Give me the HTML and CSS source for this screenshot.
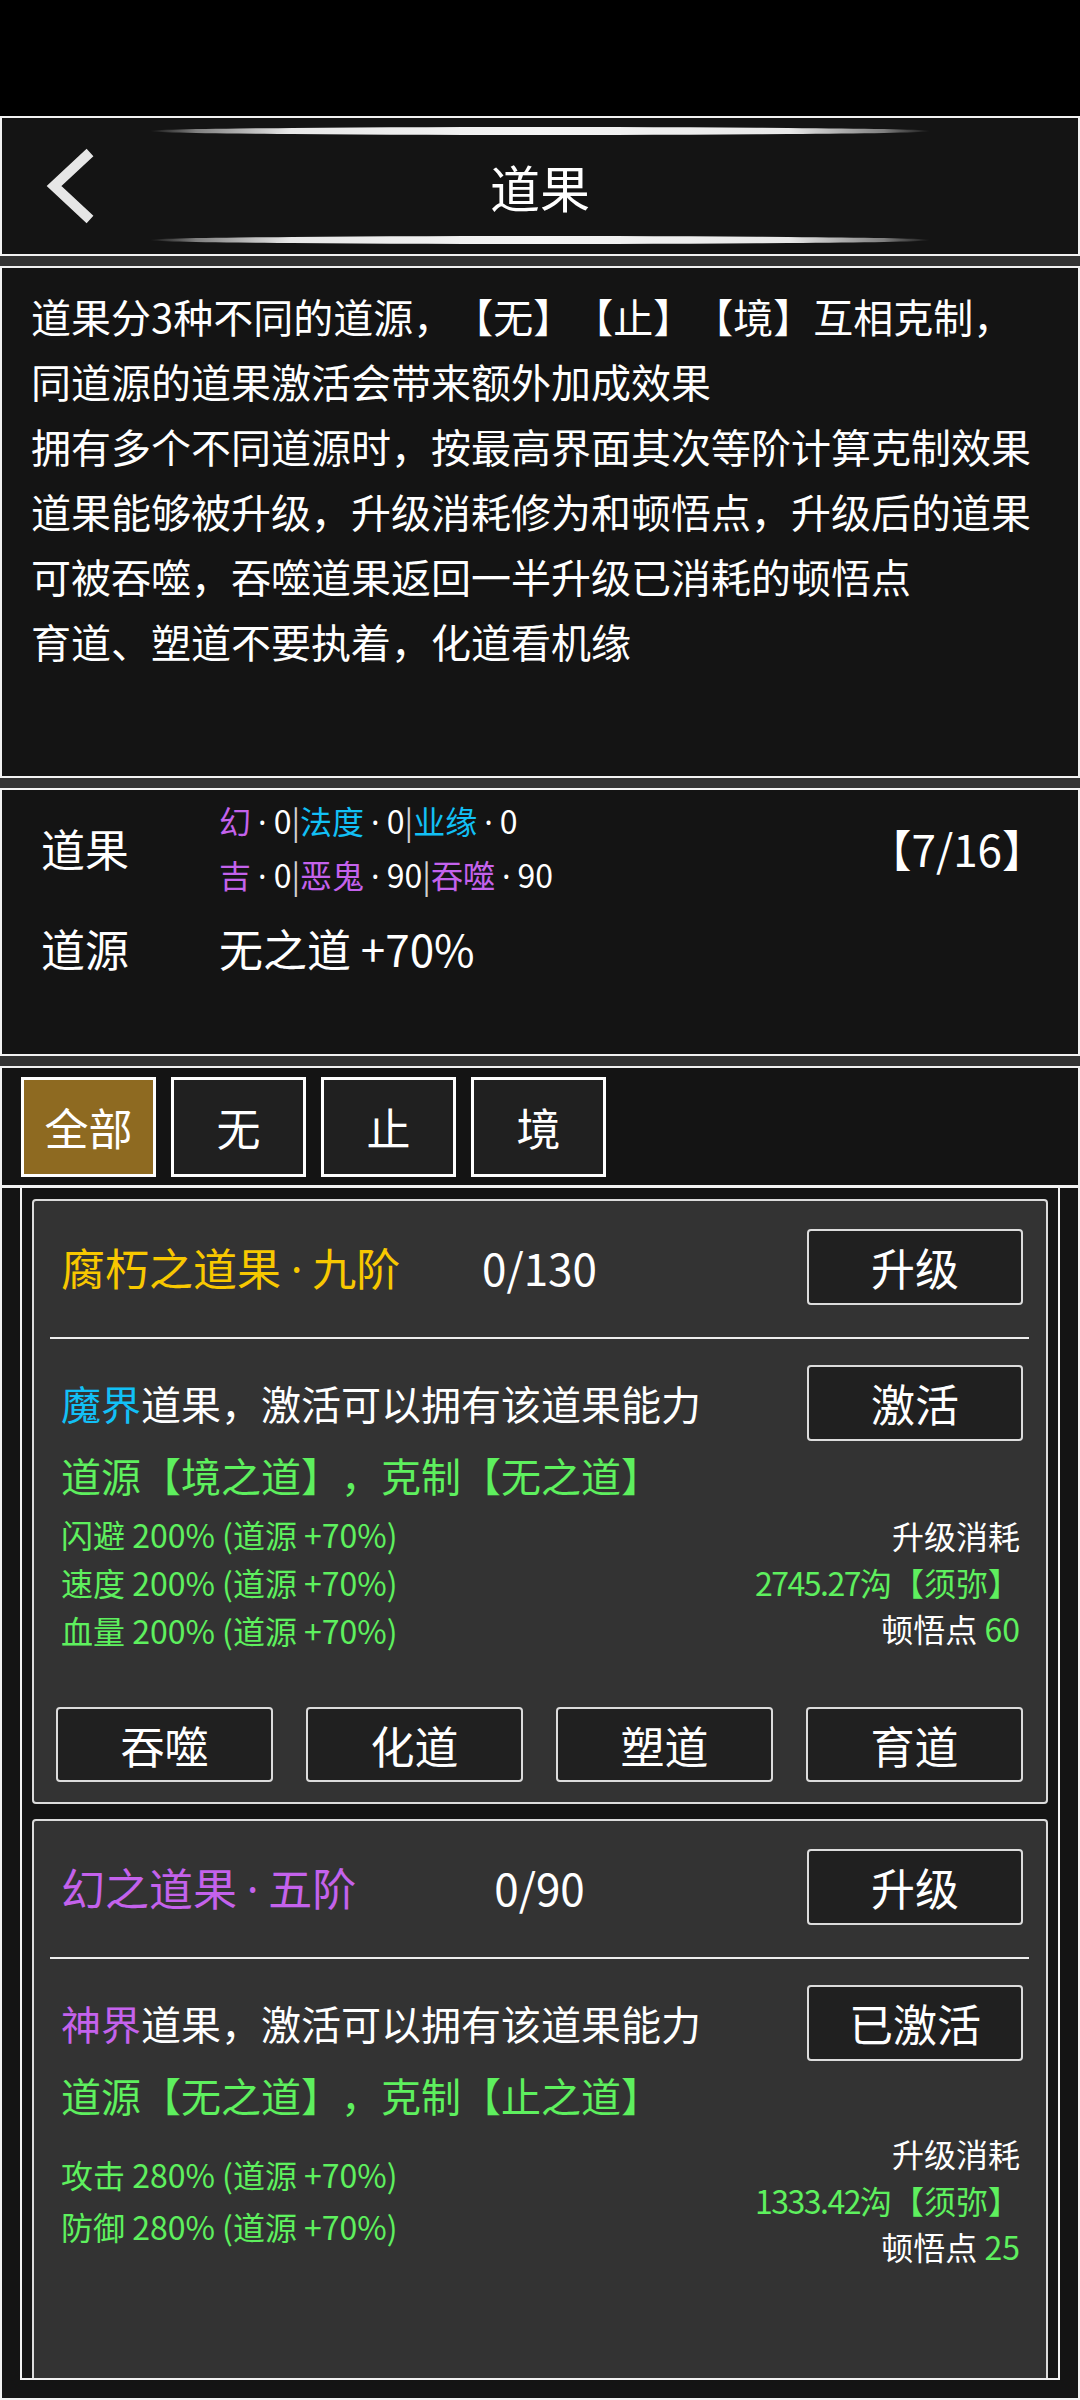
FILE: index.html
```html
<!DOCTYPE html>
<html lang="zh-CN">
<head>
<meta charset="utf-8">
<title>道果</title>
<link rel="stylesheet" href="styles.css">
</head>
<body>
<div class="page">
  <div class="status"></div>

  <header class="topbar">
    <div class="back-col">
      <svg class="back" width="60" height="80" viewBox="0 0 60 80">
        <polyline points="50,6.5 14,40 50,73.5" fill="none" stroke="#e6e6e6" stroke-width="10" stroke-linejoin="miter" stroke-linecap="butt"/>
      </svg>
    </div>
    <div class="title-col">
      <div class="deco"></div>
      <h1 class="title">道果</h1>
      <div class="deco"></div>
    </div>
    <div class="side-col"></div>
  </header>

  <div class="band"></div>

  <section class="desc">
    <div class="line">道果分3种不同的道源，【无】【止】【境】互相克制，</div>
    <div class="line">同道源的道果激活会带来额外加成效果</div>
    <div class="line">拥有多个不同道源时，按最高界面其次等阶计算克制效果</div>
    <div class="line">道果能够被升级，升级消耗修为和顿悟点，升级后的道果</div>
    <div class="line">可被吞噬，吞噬道果返回一半升级已消耗的顿悟点</div>
    <div class="line">育道、塑道不要执着，化道看机缘</div>
  </section>

  <div class="band"></div>

  <section class="info">
    <div class="info-label">道果</div>
    <div class="info-stats">
      <div><span class="purple">幻</span><span class="dot">·</span>0<span class="bar">|</span><span class="cyan">法度</span><span class="dot">·</span>0<span class="bar">|</span><span class="cyan">业缘</span><span class="dot">·</span>0</div>
      <div><span class="purple">吉</span><span class="dot">·</span>0<span class="bar">|</span><span class="purple">恶鬼</span><span class="dot">·</span>90<span class="bar">|</span><span class="purple">吞噬</span><span class="dot">·</span>90</div>
    </div>
    <div class="info-count">【7/16】</div>
    <div class="info-label row2">道源</div>
    <div class="info-value row2">无之道 +70%</div>
  </section>

  <div class="band"></div>

  <section class="main">
    <nav class="tabs">
      <div class="tab active">全部</div>
      <div class="tab">无</div>
      <div class="tab">止</div>
      <div class="tab">境</div>
    </nav>

    <div class="panel">
      <article class="card">
        <div class="card-head">
          <div class="card-title yellow">腐朽之道果<span class="dot">·</span>九阶</div>
          <div class="card-count">0/130</div>
          <div class="btn head-btn">升级</div>
        </div>
        <div class="divider"></div>
        <div class="card-row">
          <div class="card-text"><span class="cyan">魔界</span>道果，激活可以拥有该道果能力</div>
          <div class="btn">激活</div>
        </div>
        <div class="card-source green">道源【境之道】，克制【无之道】</div>
        <div class="stats">
          <div class="stats-left green">
            <div>闪避 200% (道源 +70%)</div>
            <div>速度 200% (道源 +70%)</div>
            <div>血量 200% (道源 +70%)</div>
          </div>
          <div class="stats-right">
            <div>升级消耗</div>
            <div class="green"><span class="num">2745.27</span>沟【须弥】</div>
            <div>顿悟点 <span class="green">60</span></div>
          </div>
        </div>
        <div class="actions">
          <div class="btn">吞噬</div>
          <div class="btn">化道</div>
          <div class="btn">塑道</div>
          <div class="btn">育道</div>
        </div>
      </article>

      <article class="card">
        <div class="card-head">
          <div class="card-title purple">幻之道果<span class="dot">·</span>五阶</div>
          <div class="card-count">0/90</div>
          <div class="btn head-btn">升级</div>
        </div>
        <div class="divider"></div>
        <div class="card-row">
          <div class="card-text"><span class="purple">神界</span>道果，激活可以拥有该道果能力</div>
          <div class="btn">已激活</div>
        </div>
        <div class="card-source green">道源【无之道】，克制【止之道】</div>
        <div class="stats">
          <div class="stats-left spaced green">
            <div>攻击 280% (道源 +70%)</div>
            <div>防御 280% (道源 +70%)</div>
          </div>
          <div class="stats-right">
            <div>升级消耗</div>
            <div class="green"><span class="num">1333.42</span>沟【须弥】</div>
            <div>顿悟点 <span class="green">25</span></div>
          </div>
        </div>
      </article>
    </div>
  </section>
</div>
</body>
</html>
```

FILE: styles.css
```css
* {
  box-sizing: border-box;
}

html, body {
  margin: 0;
  padding: 0;
  background: #000;
}

body {
  width: 1080px;
  height: 2400px;
  overflow: hidden;
  font-family: "Noto Sans CJK SC", "Noto Sans", sans-serif;
  color: #fff;
  text-spacing-trim: space-all;
}

.page {
  height: 2400px;
  display: flex;
  flex-direction: column;
}

.status {
  height: 116px;
  flex: none;
  background: #000;
}

/* header */
.topbar {
  flex: none;
  height: 140px;
  background: #141414;
  border: 2px solid #f2f2f2;
  display: grid;
  grid-template-columns: 148px 1fr 148px;
}

.back-col {
  display: flex;
  align-items: center;
  padding-left: 38px;
}

.back {
  display: block;
}

.title-col {
  display: flex;
  flex-direction: column;
  padding: 9px 0 10px;
}

.deco {
  height: 8px;
  border-radius: 50%;
  background: linear-gradient(90deg,
    rgba(255,255,255,0) 0%,
    rgba(200,200,200,0.6) 6%,
    #e8e8e8 18%,
    #f4f4f4 50%,
    #e8e8e8 82%,
    rgba(200,200,200,0.6) 94%,
    rgba(255,255,255,0) 100%);
}

.title {
  flex: 1;
  margin: 0;
  display: flex;
  align-items: center;
  justify-content: center;
  font-size: 50px;
  font-weight: 400;
  color: #fff;
}

.band {
  flex: none;
  height: 10px;
  background: #333;
}

/* description */
.desc {
  flex: none;
  height: 512px;
  background: #141414;
  border: 2px solid #f2f2f2;
  padding: 16px 0 0 29px;
  font-size: 40px;
  line-height: 65px;
}

.line {
  white-space: nowrap;
}

.dot {
  font-family: "Noto Sans", sans-serif;
  margin: 0 0.22em;
}

/* info */
.info {
  flex: none;
  height: 268px;
  background: #141414;
  border: 2px solid #f2f2f2;
  padding: 6px 32px 0 39px;
  display: grid;
  grid-template-columns: 178px 1fr auto;
  grid-template-rows: 104px 52px;
  row-gap: 22px;
  align-items: center;
}

.info-label {
  font-size: 44px;
  line-height: 52px;
}

.info-stats {
  font-size: 32px;
  line-height: 52px;
  white-space: nowrap;
}

.bar {
  color: #d0d0d0;
}

.info-count {
  font-size: 44px;
  line-height: 52px;
}

.info-value {
  font-size: 44px;
  line-height: 52px;
  grid-column: 2 / 4;
}

/* main */
.main {
  flex: 1;
  min-height: 0;
  background: #141414;
  border: 2px solid #f2f2f2;
  display: flex;
  flex-direction: column;
}

.tabs {
  flex: none;
  display: flex;
  gap: 15px;
  padding: 9px 0 8px 19px;
  border-bottom: 3px solid #f2f2f2;
}

.tab {
  width: 135px;
  height: 100px;
  border: 3px solid #fff;
  background: #202020;
  font-size: 44px;
  display: flex;
  align-items: center;
  justify-content: center;
}

.tab.active {
  background: #8e6a21;
}

.panel {
  flex: 1;
  min-height: 0;
  margin: 0 18px 18px;
  border: 2px solid #f2f2f2;
  border-top: none;
  padding: 11px 10px 0;
  overflow: hidden;
  display: flex;
  flex-direction: column;
  gap: 15px;
}

.card {
  flex: none;
  min-height: 605px;
  background: #333;
  border: 2px solid #dcdcdc;
  border-radius: 4px;
  padding: 28px 23px 18px 22px;
}

.card-head {
  display: grid;
  grid-template-columns: 1fr auto 1fr;
  align-items: center;
}

.card-title {
  padding-left: 5px;
  font-size: 44px;
  white-space: nowrap;
}

.card-count {
  font-size: 44px;
}

.btn {
  width: 216px;
  height: 76px;
  background: #202020;
  border: 2px solid #dcdcdc;
  border-radius: 4px;
  font-size: 44px;
  display: flex;
  align-items: center;
  justify-content: center;
  color: #fff;
}

.head-btn {
  justify-self: end;
}

.divider {
  height: 2px;
  background: #eee;
  margin: 32px -6px 26px;
}

.card-row {
  display: flex;
  justify-content: space-between;
  align-items: center;
}

.card-text {
  padding-left: 5px;
  font-size: 40px;
  white-space: nowrap;
}

.card-source {
  margin-top: 10px;
  padding-left: 5px;
  font-size: 40px;
  line-height: 48px;
  white-space: nowrap;
}

.stats {
  margin-top: 11px;
  display: flex;
  justify-content: space-between;
  align-items: center;
  font-size: 32px;
}

.stats-left {
  padding-left: 5px;
  line-height: 48px;
  white-space: nowrap;
}

.stats-left.spaced {
  display: flex;
  flex-direction: column;
  gap: 4px;
}

.stats-right {
  padding-right: 3px;
  text-align: right;
  line-height: 46.5px;
  white-space: nowrap;
}

.num {
  letter-spacing: -1.5px;
}

.actions {
  margin-top: 53px;
  display: grid;
  grid-template-columns: repeat(4, 1fr);
  gap: 33px;
}

.actions .btn {
  width: auto;
  height: 75px;
}

/* colours */
.yellow { color: #f8c800; }
.purple { color: #c462ec; }
.cyan { color: #12c0f6; }
.green { color: #5ef05e; }
```
